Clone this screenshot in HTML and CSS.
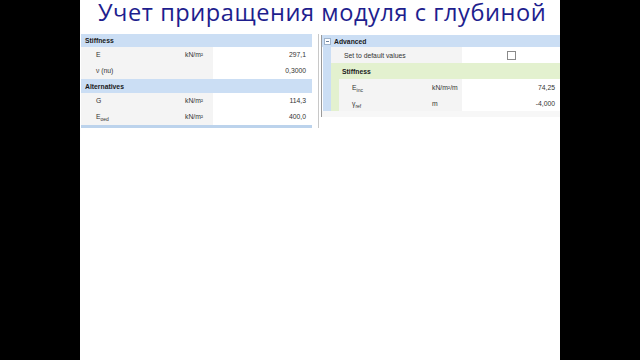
FILE: index.html
```html
<!DOCTYPE html>
<html>
<head>
<meta charset="utf-8">
<link rel="stylesheet" href="styles.css">
</head>
<body>
<div class="screen">
  <div class="slide">
    <h1 class="title">Учет приращения модуля с глубиной</h1>
    <div class="panels">
      <div class="panel left">
        <div class="hdr">Stiffness</div>
        <div class="row"><span class="lbl">E</span><span class="unit">kN/m²</span><span class="val">297,1</span></div>
        <div class="row"><span class="lbl">ν (nu)</span><span class="unit"></span><span class="val">0,3000</span></div>
        <div class="hdr second">Alternatives</div>
        <div class="row"><span class="lbl">G</span><span class="unit">kN/m²</span><span class="val">114,3</span></div>
        <div class="row"><span class="lbl">E<sub>oed</sub></span><span class="unit">kN/m²</span><span class="val">400,0</span></div>
        <div class="foot"></div>
      </div>
      <div class="panel right">
        <div class="rhdr"><span class="minus"></span><span>Advanced</span></div>
        <div class="rrow">
          <span class="strip blue"></span>
          <span class="rlbl wide">Set to default values</span>
          <span class="rval"><span class="check"></span></span>
        </div>
        <div class="rrow">
          <span class="strip blue"></span>
          <span class="ghdr">Stiffness</span>
        </div>
        <div class="rrow">
          <span class="strip blue"></span>
          <span class="strip green"></span>
          <span class="rlbl">E<sub>inc</sub></span>
          <span class="runit">kN/m²/m</span>
          <span class="rval num">74,25</span>
        </div>
        <div class="rrow">
          <span class="strip blue"></span>
          <span class="strip green"></span>
          <span class="rlbl">γ<sub>ref</sub></span>
          <span class="runit">m</span>
          <span class="rval num">-4,000</span>
        </div>
        <div class="rfoot"></div>
      </div>
    </div>
  </div>
</div>
</body>
</html>
```
FILE: styles.css
```css
html, body {
  margin: 0;
  padding: 0;
  background: #000;
}
.screen {
  width: 640px;
  height: 360px;
  display: flex;
  justify-content: center;
  background: #000;
}
.slide {
  width: 480px;
  height: 360px;
  background: #fff;
  overflow: hidden;
  display: flex;
  flex-direction: column;
}
.title {
  margin: 0;
  height: 34px;
  padding-left: 18px;
  font-family: "Open Sans", "DejaVu Sans", sans-serif;
  font-weight: 400;
  font-size: 23.6px;
  line-height: 25px;
  padding-top: 0;
  color: #1e1e8e;
  white-space: nowrap;
  letter-spacing: 0.55px;
  box-sizing: border-box;
}
.panels {
  display: flex;
  padding-left: 1px;
  font-family: "Liberation Sans", Arial, sans-serif;
  font-size: 6.8px;
  color: #333;
}
.panel.left {
  width: 232px;
  display: flex;
  flex-direction: column;
}
.hdr {
  height: 13px;
  line-height: 13px;
  background: #cbdef4;
  font-weight: bold;
  padding-left: 4px;
  color: #1a1a1a;
}
.hdr.second {
  height: 14px;
  line-height: 15px;
}
.row {
  height: 16px;
  display: grid;
  grid-template-columns: 104px 28px 1fr;
  align-items: center;
  background: #fff;
}
.lbl {
  height: 16px;
  line-height: 16px;
  padding-left: 15px;
  background: #f4f4f4;
}
.unit {
  height: 16px;
  line-height: 16px;
  background: #f4f4f4;
}
.val {
  text-align: right;
  padding-right: 6px;
  line-height: 16px;
}
sub {
  font-size: 5px;
  vertical-align: -2px;
  line-height: 0;
}
.foot {
  height: 3px;
  background: #bcd3ec;
}
.panel.right {
  margin-left: 6px;
  width: 240px;
  border-left: 1px solid #c8c8c8;
  padding-left: 2px;
  display: flex;
  flex-direction: column;
}
.panel.right > * {
  border-left: 1px solid #9a9a9a;
}
.rhdr {
  height: 12px;
  margin-top: 1px;
  display: flex;
  align-items: center;
  gap: 3px;
  background: #cbdef4;
  font-weight: bold;
  color: #1a1a1a;
  padding-left: 2px;
}
.minus {
  width: 5px;
  height: 5px;
  border: 1px solid #9fb4cc;
  background: #fff;
  position: relative;
}
.minus::after {
  content: "";
  position: absolute;
  left: 1px;
  top: 2px;
  width: 3px;
  height: 1px;
  background: #6a7f99;
}
.rrow {
  height: 16px;
  display: flex;
  align-items: stretch;
  line-height: 17px;
}
.strip {
  width: 8px;
  flex: none;
}
.strip.blue { background: #cbdef4; margin-left: 1px; }
.strip.green { background: #e3f1cf; width: 8px; }
.rlbl {
  width: 80px;
  padding-left: 13px;
  background: #f4f4f4;
}
.rlbl.wide {
  width: 118px;
}
.runit {
  width: 30px;
  background: #f4f4f4;
}
.rval {
  flex: 1;
  background: #fff;
  display: flex;
  align-items: center;
  padding-left: 45px;
}
.rval.num {
  justify-content: flex-end;
  padding-left: 0;
  padding-right: 5px;
}
.check {
  width: 7px;
  height: 7px;
  border: 1px solid #8a8a8a;
  background: #fff;
}
.ghdr {
  flex: 1;
  background: #e3f1cf;
  font-weight: bold;
  padding-left: 11px;
  color: #1a1a1a;
}
.rfoot {
  height: 6px;
  background: #f7f7f7;
}
```
